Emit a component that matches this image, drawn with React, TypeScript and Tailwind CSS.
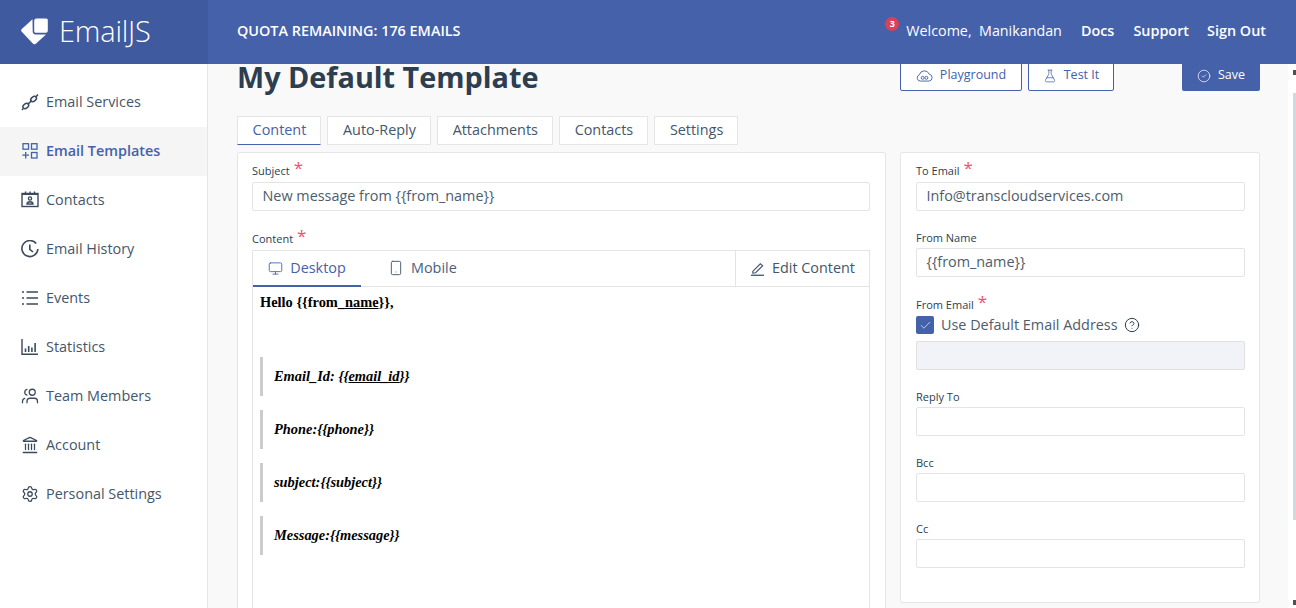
import React from 'react';
import { Monitor, Smartphone, Check, CircleCheck, CircleHelp, FlaskConical, Settings, Landmark, Users } from 'lucide-react';

const LogoMark = () => (
  <svg viewBox="0 0 27 27" className="w-[27px] h-[27px]" fill="white">
    <path d="M11.5 1.2 L0.8 11 a2 2 0 0 0 0 2.8 L11.8 25.6 a2.2 2.2 0 0 0 3 0.1 L25 16.4 H14.5 a2.8 2.8 0 0 1 -2.8 -2.8 Z" />
    <path d="M15.5 0.5 H25.2 a1.6 1.6 0 0 1 1.6 1.6 V12.2 a2.6 2.6 0 0 1 -2.6 2.6 H14.8 a1.6 1.6 0 0 1 -1.6 -1.6 V2.8 a2.3 2.3 0 0 1 2.3 -2.3 Z" />
  </svg>
);

const ChainIcon = () => (
  <svg viewBox="0 0 18 18" className="w-[18px] h-[18px]" fill="none" stroke="currentColor" strokeWidth="1.5">
    <ellipse cx="4.8" cy="13" rx="3.2" ry="2.2" transform="rotate(-40 4.8 13)" />
    <ellipse cx="12.6" cy="6" rx="3.2" ry="2.2" transform="rotate(-40 12.6 6)" />
    <path d="M6.6 11.4 L10.8 7.6 M15 3.8 L17 1.5 M2 15.6 L1 17" />
  </svg>
);

const TemplatesIcon = () => (
  <svg viewBox="0 0 16 16" className="w-[16px] h-[16px] ml-[1px] mr-[1px]" fill="none" stroke="currentColor" strokeWidth="1.3">
    <rect x="1" y="0.7" width="5.5" height="5.5" />
    <rect x="9.5" y="0.7" width="5.5" height="5.5" />
    <rect x="9.5" y="9.5" width="5.5" height="5.5" />
    <path d="M3.7 9 V15.4 M0.3 12.2 H7" />
  </svg>
);

const ContactsIcon = () => (
  <svg viewBox="0 0 18 18" className="w-[18px] h-[18px]" fill="none" stroke="currentColor" strokeWidth="1.4">
    <rect x="1" y="2.5" width="16" height="13" />
    <path d="M1 3 H17" strokeWidth="2" />
    <path d="M4.5 0.5 V3 M9 0.5 V3 M13.5 0.5 V3" />
    <circle cx="9" cy="7.5" r="1.6" />
    <path d="M6 13 C6 10 12 10 12 13 Z" />
  </svg>
);

const HistoryIcon = () => (
  <svg viewBox="0 0 18 18" className="w-[18px] h-[18px]" fill="none" stroke="currentColor" strokeWidth="1.6">
    <path d="M15.2 3.6 A8 8 0 1 0 16.9 9" />
    <path d="M8.8 4.6 V9.4 L12 12" />
  </svg>
);

const EventsIcon = () => (
  <svg viewBox="0 0 18 18" className="w-[18px] h-[18px]" fill="none" stroke="currentColor" strokeWidth="1.5">
    <path d="M5.5 3 H17 M5.5 9 H17 M5.5 15 H17" />
    <path d="M1 3 H3 M1 9 H3 M1 15 H3" />
  </svg>
);

const StatsIcon = () => (
  <svg viewBox="0 0 18 18" className="w-[18px] h-[18px]" fill="none" stroke="currentColor" strokeWidth="1.4">
    <path d="M1 1 V16.2 H17" />
    <path d="M4.5 10.5 V14 M7.7 8 V14 M10.9 9.5 V14 M14.1 5 V14" strokeWidth="1.6" />
  </svg>
);

const iconClass = 'w-[18px] h-[18px]';

const navItems = [
  { label: 'Email Services', icon: <ChainIcon /> },
  { label: 'Email Templates', icon: <TemplatesIcon />, active: true },
  { label: 'Contacts', icon: <ContactsIcon /> },
  { label: 'Email History', icon: <HistoryIcon /> },
  { label: 'Events', icon: <EventsIcon /> },
  { label: 'Statistics', icon: <StatsIcon /> },
  { label: 'Team Members', icon: <Users className={`${iconClass} -scale-x-100`} strokeWidth={1.7} /> },
  { label: 'Account', icon: <Landmark className={iconClass} strokeWidth={1.7} /> },
  { label: 'Personal Settings', icon: <Settings className={iconClass} strokeWidth={1.7} /> },
];

const tabs = ['Content', 'Auto-Reply', 'Attachments', 'Contacts', 'Settings'];

const Star = () => <span className="text-[#f0506e] text-[17px] leading-[10px] ml-[4px] mb-[8px]">*</span>;

const FieldLabel = ({ text, required, raised }: { text: string; required?: boolean; raised?: boolean }) => (
  <div className={`h-[21px] flex items-center text-[11px] text-[#2c3e50] ${raised ? '' : 'pt-[2px]'}`}>
    {text}
    {required && <Star />}
  </div>
);

const Input = ({ value }: { value?: string }) => (
  <div className="h-[29px] border border-[#e4e4e4] rounded-[2px] bg-white px-[9.5px] pb-[1px] flex items-center text-[14.4px] text-[#4d5c6e]">
    {value}
  </div>
);

const Quote = ({ children }: { children: React.ReactNode }) => (
  <div className="border-l-[3px] border-[#cccccc] pl-[11px] h-[39px] mb-[14px] flex items-center italic font-bold text-[14.4px]">
    <span>{children}</span>
  </div>
);

export default function App() {
  return (
    <div className="h-[608px] w-[1296px] overflow-hidden flex flex-col bg-[#f9f9f9] font-['Open_Sans',sans-serif] text-[#2c3e50]">
      {/* Header */}
      <header className="h-[64px] flex shrink-0 bg-[#4561aa] text-white">
        <div className="w-[208px] bg-[#3f5a9e] flex items-center pl-[21px] gap-[11px] pb-[2px]">
          <LogoMark />
          <span className="text-[29px] font-light tracking-[-0.2px]">EmailJS</span>
        </div>
        <div className="flex-1 flex items-center justify-between pl-[29px] pr-[30px] pb-[3px]">
          <span className="text-[14.4px] font-semibold">QUOTA REMAINING: 176 EMAILS</span>
          <div className="flex items-center text-[14.4px] font-semibold">
            <span className="relative font-medium text-[14.3px] mr-[19px]">
              <span className="absolute -left-[21px] -top-[3px] w-[14px] h-[14px] rounded-full bg-[#d9415a] text-[9px] font-bold flex items-center justify-center">3</span>
              Welcome,&nbsp; Manikandan
            </span>
            <span className="mr-[19px]">Docs</span>
            <span className="mr-[18px]">Support</span>
            <span>Sign Out</span>
          </div>
        </div>
      </header>

      <div className="flex-1 flex min-h-0">
        {/* Sidebar */}
        <aside className="w-[208px] shrink-0 bg-white border-r border-[#e6e6e6] pt-[14px]">
          {navItems.map((item) => (
            <div
              key={item.label}
              className={`h-[49px] pb-[2px] flex items-center pl-[21px] gap-[7px] text-[14.4px] ${item.active ? 'bg-[#f5f5f5] text-[#4561aa] font-semibold' : 'text-[#44566a]'}`}
            >
              <span className={item.active ? 'text-[#4561aa]' : 'text-[#3b4a5c]'}>{item.icon}</span>
              <span>{item.label}</span>
            </div>
          ))}
        </aside>

        {/* Main, scrolled so the top is cut by the header */}
        <main className="flex-1 overflow-hidden flex">
          <div className="flex-1 pl-[29px] pr-[28px] min-w-0">
            <div className="flex items-start h-[57px] -mt-[5px]">
              <h1 className="text-[28.8px] font-bold leading-[26px] mt-[5px] text-[#2c3e50] flex-1">My Default Template</h1>
              <div className="flex gap-[6px] mr-[68px]">
                <button className="h-[32px] w-[122px] pt-[1px] border border-[#4561aa] rounded-[2px] bg-white text-[#4561aa] text-[12.5px] flex items-center justify-center gap-[7px]">
                  <svg viewBox="0 0 18 14" className="w-[17px] h-[13px]" fill="none" stroke="currentColor" strokeWidth="1">
                    <path d="M4.5 13 a3.5 3.5 0 0 1 -1 -6.8 A5.5 5.5 0 0 1 14 5.5 a3.8 3.8 0 0 1 0 7.5 Z" />
                    <circle cx="7" cy="9.5" r="1.6" />
                    <circle cx="11" cy="9.5" r="1.6" />
                  </svg>
                  Playground
                </button>
                <button className="h-[32px] w-[86px] pt-[1px] border border-[#4561aa] rounded-[2px] bg-white text-[#4561aa] text-[12.5px] flex items-center justify-center gap-[7px]">
                  <FlaskConical className="w-[14px] h-[14px]" strokeWidth={1.3} />
                  Test It
                </button>
              </div>
              <button className="h-[32px] w-[78px] pt-[1px] rounded-[2px] bg-[#4561aa] text-white text-[12.5px] flex items-center justify-center gap-[7px]">
                <CircleCheck className="w-[14px] h-[14px]" strokeWidth={1.2} />
                Save
              </button>
            </div>

            <div className="flex gap-[6.5px]">
              {tabs.map((tab, i) => (
                <div
                  key={tab}
                  className={`h-[29px] pl-[14.6px] pr-[13.6px] pb-[1px] flex items-center bg-white border border-[#e6e6e6] text-[14.4px] ${i === 0 ? 'border-b-[#4561aa] text-[#4561aa]' : 'text-[#44566a]'}`}
                >
                  {tab}
                </div>
              ))}
            </div>

            <div className="flex gap-[14px] mt-[7px]">
              {/* Left panel */}
              <section className="w-[649px] h-[500px] shrink-0 bg-white border border-[#e6e6e6] rounded-[2px] pl-[14px] pr-[15px] pt-[8px]">
                <FieldLabel text="Subject" required raised />
                <Input value="New message from {{from_name}}" />
                <div className="mt-[18px]">
                  <FieldLabel text="Content" required raised />
                </div>
                <div className="border border-[#e4e4e4] border-b-0 h-[400px]">
                  <div className="h-[36px] flex border-b border-[#e4e4e4] text-[14.4px]">
                    <div className="w-[108px] flex items-center justify-center gap-[7px] text-[#4561aa] border-b-2 border-[#4561aa] h-[36px]">
                      <Monitor className="w-[15px] h-[15px]" strokeWidth={1.4} />
                      Desktop
                    </div>
                    <div className="pl-[27px] pb-[1px] flex items-center gap-[7px] text-[#4a5f80]">
                      <Smartphone className="w-[16px] h-[16px] text-[#44566a]" strokeWidth={1.4} />
                      Mobile
                    </div>
                    <div className="ml-auto w-[134px] pb-[1px] border-l border-[#e4e4e4] flex items-center justify-center gap-[7px] text-[#44566a]">
                      <svg viewBox="0 0 16 16" className="w-[15px] h-[15px]" fill="none" stroke="currentColor" strokeWidth="1.2">
                        <path d="M3 11 L11 3 L13.5 5 L6 12.5 L3 13 Z" />
                        <path d="M1 15.2 H15" strokeWidth="1.4" />
                      </svg>
                      Edit Content
                    </div>
                  </div>
                  <div className="pl-[7px] pt-[5px] font-['Liberation_Serif',serif] text-black">
                    <div className="font-bold text-[14.4px] leading-[20px]">
                      Hello {'{{'}from_<u>name</u>{'}}'},
                    </div>
                    <div className="h-[45px]" />
                    <Quote>Email_Id: {'{{'}<u>email_id</u>{'}}'}</Quote>
                    <Quote>Phone:{'{{'}phone{'}}'}</Quote>
                    <Quote>subject:{'{{'}subject{'}}'}</Quote>
                    <Quote>Message:{'{{'}message{'}}'}</Quote>
                  </div>
                </div>
              </section>

              {/* Right panel */}
              <section className="w-[360px] h-[451px] shrink-0 bg-white border border-[#e6e6e6] rounded-[2px] pl-[15px] pr-[14px] pt-[8px]">
                <FieldLabel text="To Email" required raised />
                <Input value="Info@transcloudservices.com" />
                <div className="mt-[16px]">
                  <FieldLabel text="From Name" />
                </div>
                <Input value="{{from_name}}" />
                <div className="mt-[17px]">
                  <FieldLabel text="From Email" required />
                </div>
                <div className="flex items-center h-[18px] mb-[7px] mt-[1px] text-[14.4px] text-[#4d5c6e]">
                  <span className="w-[18px] h-[18px] bg-[#4561aa] rounded-[2px] flex items-center justify-center mr-[7px]">
                    <Check className="w-[13px] h-[13px] text-white" strokeWidth={1.2} />
                  </span>
                  Use Default Email Address
                  <CircleHelp className="w-[16px] h-[16px] ml-[6px] text-[#2c3e50]" strokeWidth={1.5} />
                </div>
                <div className="h-[29px] border border-[#e0e0e0] rounded-[2px] bg-[#f2f3f8]" />
                <div className="mt-[16px]">
                  <FieldLabel text="Reply To" />
                </div>
                <Input />
                <div className="mt-[16px]">
                  <FieldLabel text="Bcc" />
                </div>
                <Input />
                <div className="mt-[16px]">
                  <FieldLabel text="Cc" />
                </div>
                <Input />
              </section>
            </div>
          </div>

          {/* Scrollbar, mostly off the right edge of the window */}
          <div className="w-[8px] shrink-0 bg-white flex flex-col items-start pl-[5px] pt-[6px] pb-[3px]">
            <div className="w-[3px] h-[5px] bg-[#505050]" />
            <div className="w-[3px] h-[427px] bg-[#d0d8e2] mt-[18px]" />
            <div className="flex-1" />
            <div className="w-[3px] h-[5px] bg-[#505050]" />
          </div>
        </main>
      </div>
    </div>
  );
}
